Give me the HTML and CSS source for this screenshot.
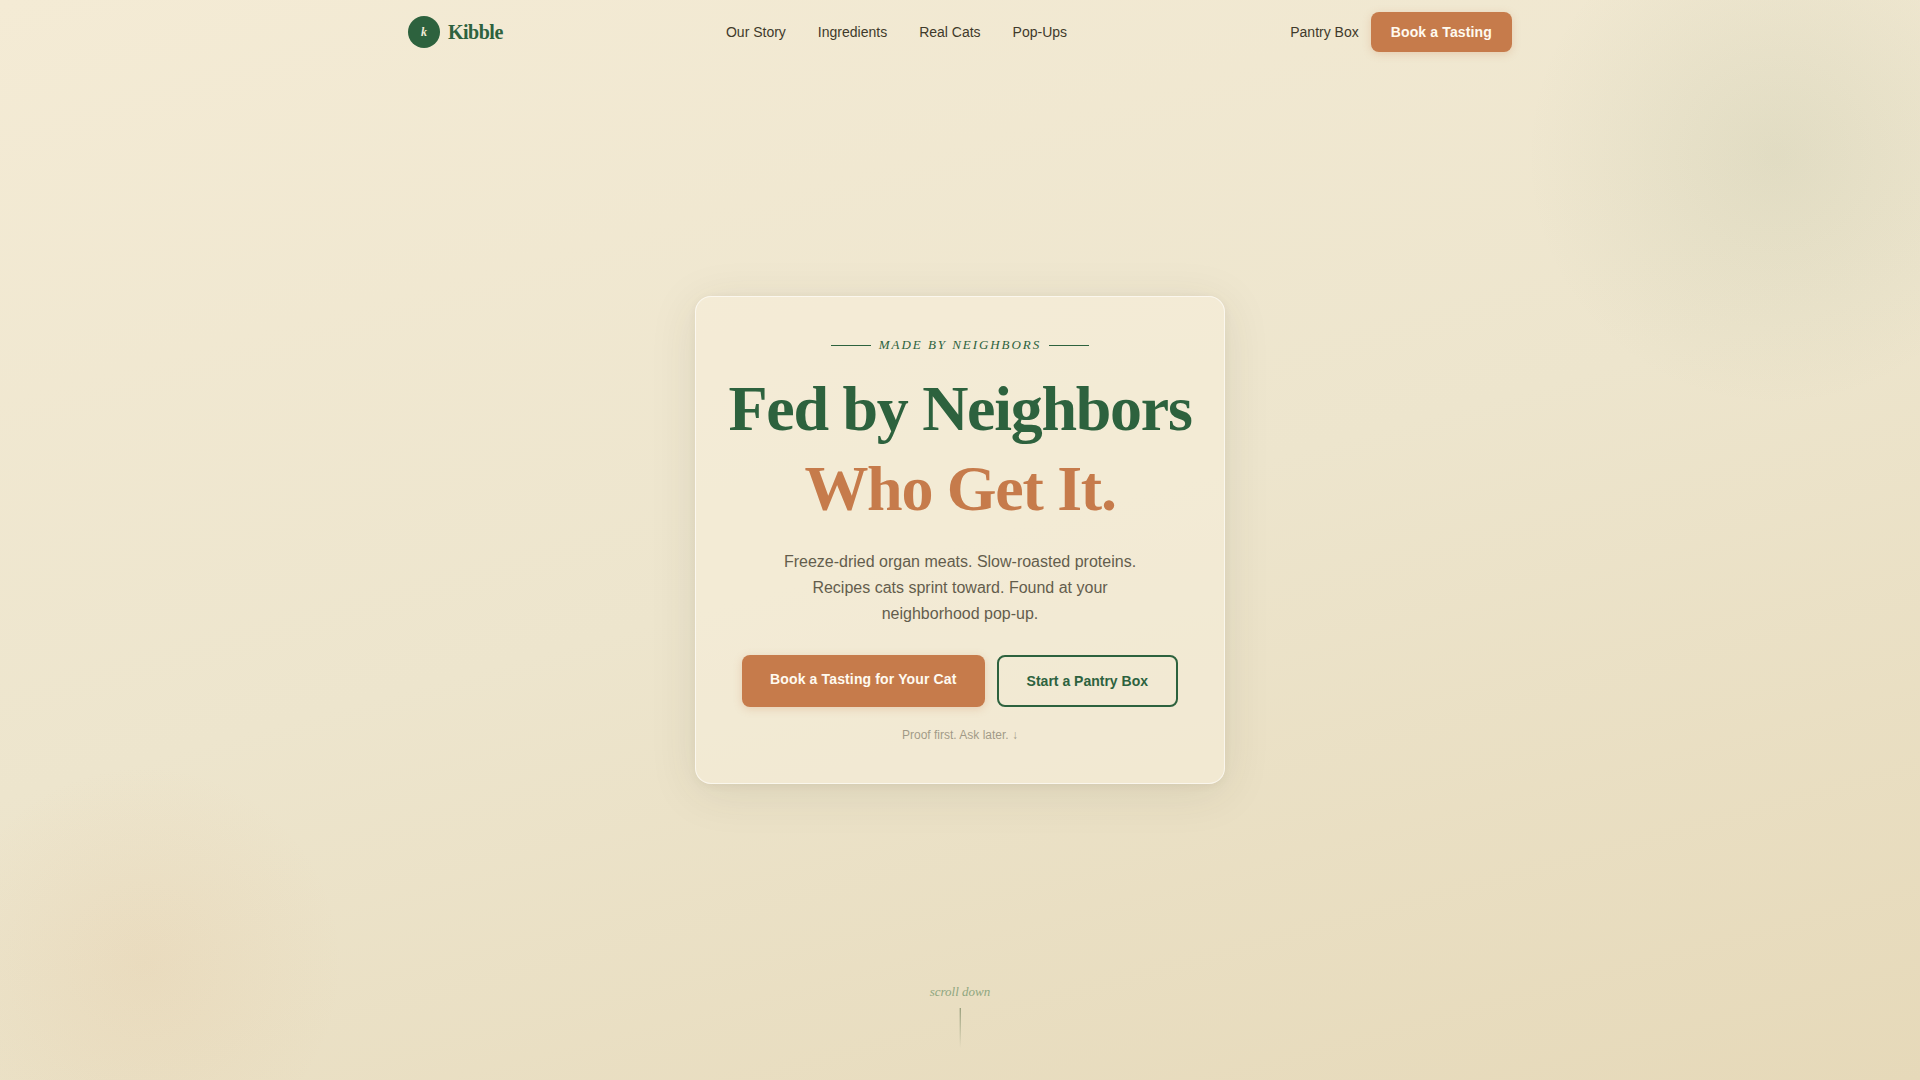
FILE: index.html
```html
<!DOCTYPE html>
<html lang="en">
<head>
<meta charset="utf-8">
<meta name="viewport" content="width=device-width, initial-scale=1">
<title>Kibble</title>
<link rel="stylesheet" href="styles.css">
</head>
<body>
<header class="site-header">
  <a class="brand" href="#"><span class="brand-mark">k</span><span class="brand-name">Kibble</span></a>
  <nav class="main-nav">
    <a href="#story">Our Story</a>
    <a href="#ingredients">Ingredients</a>
    <a href="#cats">Real Cats</a>
    <a href="#popups">Pop-Ups</a>
  </nav>
  <div class="header-actions">
    <a href="#pantry">Pantry Box</a>
    <a class="btn btn-primary btn-small" href="#book">Book a Tasting</a>
  </div>
</header>
<main class="hero">
  <section class="card">
    <p class="eyebrow">Made by Neighbors</p>
    <h1 class="headline">Fed by Neighbors<span class="accent">Who Get It.</span></h1>
    <p class="lede">Freeze-dried organ meats. Slow-roasted proteins. Recipes cats sprint toward. Found at your neighborhood pop-up.</p>
    <div class="actions">
      <a class="btn btn-primary" href="#book">Book a Tasting for Your Cat</a>
      <a class="btn btn-outline" href="#pantry">Start a Pantry Box</a>
    </div>
    <p class="note">Proof first. Ask later. ↓</p>
  </section>
  <div class="scroll-cue">scroll down</div>
</main>
</body>
</html>
```
FILE: styles.css
```css
:root {
  --green: #2d623e;
  --clay: #c67b4b;
  --ink: #3f3a2b;
  --serif: "Liberation Serif", serif;
  --sans: "Liberation Sans", sans-serif;
}

* { box-sizing: border-box; }

body {
  margin: 0;
  min-height: 100vh;
  display: flex;
  flex-direction: column;
  font-family: var(--sans);
  color: var(--ink);
  background:
    radial-gradient(circle 250px at right 144px top 156px, rgba(107, 130, 90, 0.1), rgba(107, 130, 90, 0)),
    radial-gradient(circle 200px at 144px calc(100% - 116px), rgba(215, 150, 90, 0.09), rgba(215, 150, 90, 0)),
    linear-gradient(165deg, #f4ebd5 0%, #ede5cd 50%, #e6d9b9 100%);
}

a { color: inherit; text-decoration: none; }
p, h1 { margin: 0; }

.site-header {
  width: 100%;
  max-width: 1152px;
  height: 64px;
  margin: 0 auto;
  padding: 0 24px;
  display: flex;
  align-items: center;
  justify-content: space-between;
  font-size: 14px;
}

.brand, .header-actions { display: flex; align-items: center; }
.brand { gap: 8px; color: var(--green); font-family: var(--serif); }
.brand-mark {
  width: 32px;
  height: 32px;
  border-radius: 50%;
  display: grid;
  place-items: center;
  background: var(--green);
  color: #f5ecd7;
  font-size: 12px;
  font-weight: 700;
  font-style: italic;
}
.brand-name { font-size: 20px; font-weight: 700; letter-spacing: -0.025em; }
.main-nav { display: flex; gap: 32px; }
.header-actions { gap: 12px; }

.btn {
  padding: 14px 28px;
  border-radius: 8px;
  font-size: 14px;
  font-weight: 700;
  line-height: 20px;
}
.btn-primary {
  background: var(--clay);
  color: #fffaf0;
  letter-spacing: 0.01em;
  box-shadow: 0 2px 8px rgba(198, 123, 75, 0.25);
}
.btn-small { padding: 10px 20px; }
.btn-outline { border: 2px solid var(--green); color: var(--green); }

.hero {
  flex: 1;
  display: grid;
  place-items: center;
  padding: 48px 24px 112px;
  position: relative;
}

.card {
  padding: 40px 32px;
  border: 1px solid rgba(255, 255, 255, 0.6);
  border-radius: 16px;
  background: rgba(247, 238, 219, 0.6);
  box-shadow: 0 8px 48px rgba(61, 56, 41, 0.1), 0 2px 8px rgba(61, 56, 41, 0.06);
  text-align: center;
}

.eyebrow {
  display: flex;
  align-items: center;
  justify-content: center;
  gap: 8px;
  margin-bottom: 16px;
  color: var(--green);
  font-family: var(--serif);
  font-size: 13px;
  font-style: italic;
  line-height: 16px;
  letter-spacing: 0.15em;
  text-transform: uppercase;
}
.eyebrow::before, .eyebrow::after {
  content: "";
  width: 40px;
  height: 1px;
  background: var(--green);
}

.headline {
  margin-bottom: 20px;
  color: var(--green);
  font-family: var(--serif);
  font-size: 64px;
  line-height: 80px;
  letter-spacing: -0.02em;
}
.accent { display: block; color: var(--clay); }

.lede {
  max-width: 380px;
  margin: 0 auto 28px;
  font-size: 16px;
  line-height: 26px;
  opacity: 0.8;
}

.actions { display: flex; justify-content: center; gap: 12px; }

.note { margin-top: 20px; font-size: 12px; line-height: 16px; opacity: 0.45; }

.scroll-cue {
  position: absolute;
  bottom: 32px;
  left: 50%;
  transform: translateX(-50%);
  display: flex;
  flex-direction: column;
  align-items: center;
  gap: 8px;
  color: #8fa67f;
  font-family: var(--serif);
  font-size: 13px;
  font-style: italic;
  line-height: 16px;
}
.scroll-cue::after {
  content: "";
  width: 1px;
  height: 40px;
  background: linear-gradient(#7d8a66, rgba(125, 138, 102, 0));
}
```
